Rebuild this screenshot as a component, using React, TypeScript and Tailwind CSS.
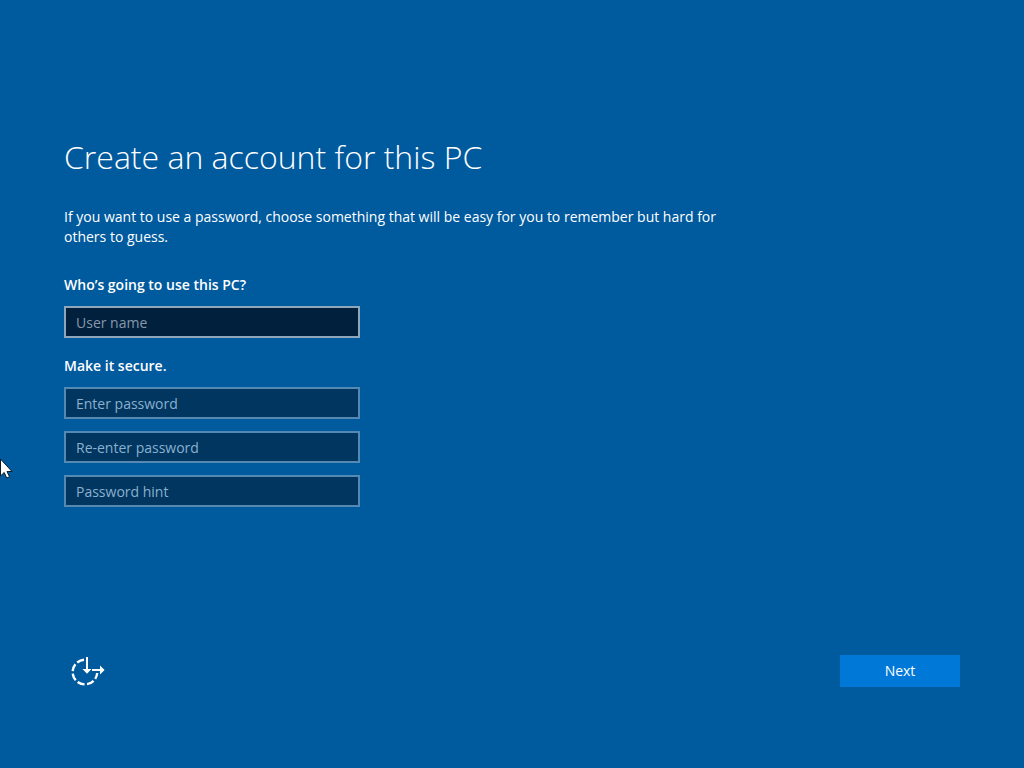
import { useState } from "react";

const secureFields = [
  { id: "password", label: "Enter password", type: "password" },
  { id: "confirm", label: "Re-enter password", type: "password" },
  { id: "hint", label: "Password hint", type: "text" },
];

function EaseOfAccessIcon() {
  return (
    <svg width="40" height="32" viewBox="68 655 40 32" fill="none" stroke="currentColor" aria-hidden="true">
      {/* dashed dial, open at the upper right */}
      <path d="M84 659.8A12.3 12.3 0 1 0 97.2 673" strokeWidth="2.4" strokeDasharray="7.4 2.5" />
      <path d="M87 657v13M92 670h9" strokeWidth="2" />
      <path d="M82.5 669h9l-4.5 4.8zM100 665.5v9l4.6-4.5z" fill="currentColor" stroke="none" />
    </svg>
  );
}

function Cursor() {
  return (
    <svg width="13" height="22" viewBox="0 0 13 22" className="absolute left-0 top-[458px] pointer-events-none" aria-hidden="true">
      <path d="M0.5 1v17l3.7-3.5 2.5 5.5 2.8-1.2-2.5-5.3h5z" fill="white" stroke="#0b1c2c" />
    </svg>
  );
}

export default function App() {
  const [values, setValues] = useState<Record<string, string>>({});
  const update = (id: string, value: string) => setValues((v) => ({ ...v, [id]: value }));

  return (
    <div className="relative min-h-screen bg-[#005a9e] text-white font-['Open_Sans',sans-serif] text-sm overflow-hidden">
      <form
        onSubmit={(e) => e.preventDefault()}
        className="min-h-screen flex flex-col justify-between px-16 pt-[135px] pb-[81px]"
      >
        <main className="max-w-[672px]">
          <h1 className="text-[32px] leading-[44px] font-light">Create an account for this PC</h1>
          <p className="mt-7 leading-5">
            If you want to use a password, choose something that will be easy for you to remember but hard for others to
            guess.
          </p>

          <label htmlFor="username" className="block mt-7 leading-5 font-semibold">
            Who’s going to use this PC?
          </label>
          <input
            id="username"
            type="text"
            placeholder="User name"
            value={values.username || ""}
            onChange={(e) => update("username", e.target.value)}
            className="block mt-[11px] w-[296px] h-8 px-[10px] border-2 border-[#8ea6b9] bg-[#00203d] placeholder:text-[#8799ac] outline-none"
          />

          <fieldset className="mt-[18px]">
            <legend className="leading-5 font-semibold">Make it secure.</legend>
            <div className="flex flex-col gap-3 mt-[11px]">
              {secureFields.map((f) => (
                <input
                  key={f.id}
                  id={f.id}
                  type={f.type}
                  aria-label={f.label}
                  placeholder={f.label}
                  value={values[f.id] || ""}
                  onChange={(e) => update(f.id, e.target.value)}
                  className="w-[296px] h-8 px-[10px] border-2 border-[#5489b3] bg-[#00365f] placeholder:text-[#8bb0d0] outline-none"
                />
              ))}
            </div>
          </fieldset>
        </main>

        <div className="flex items-center justify-between">
          <button type="button" aria-label="Ease of access" className="ml-1">
            <EaseOfAccessIcon />
          </button>
          <button type="submit" className="w-30 h-8 bg-[#0078d7]">
            Next
          </button>
        </div>
      </form>

      <Cursor />
    </div>
  );
}
